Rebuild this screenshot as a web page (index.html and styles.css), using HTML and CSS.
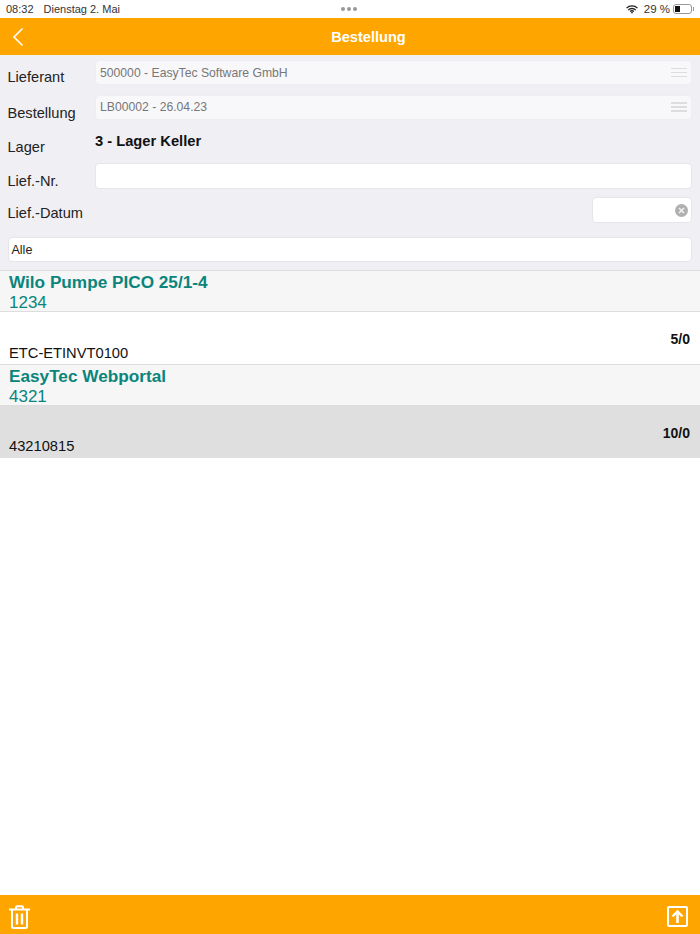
FILE: index.html
```html
<!DOCTYPE html>
<html lang="de">
<head>
    <meta charset="UTF-8">
    <meta name="viewport" content="width=device-width, initial-scale=1.0">
    <title>Bestellung</title>
    <link rel="stylesheet" href="styles.css">
</head>
<body>
    <div class="page">
        <div class="statusbar">
            <div class="status-left">
                <span>08:32</span>
                <span>Dienstag 2. Mai</span>
            </div>
            <div class="status-dots"><i></i><i></i><i></i></div>
            <div class="status-right">
                <svg class="wifi" width="12" height="9" viewBox="0 0 14 10">
                    <path d="M0.6 3.4a9.2 9.2 0 0 1 12.8 0M2.7 5.5a6.2 6.2 0 0 1 8.6 0M4.8 7.4a3.2 3.2 0 0 1 4.4 0" fill="none" stroke="#222" stroke-width="1.6"/>
                    <path d="M7 10l-1.4-1.5a2 2 0 0 1 2.8 0z" fill="#222"/>
                </svg>
                <span class="percent">29 %</span>
                <div class="battery"><div class="battery-level"></div></div>
                <div class="battery-tip"></div>
            </div>
        </div>

        <header class="topbar">
            <svg class="back" width="12" height="20" viewBox="0 0 12 20">
                <path d="M10.5 1.5L2 10l8.5 8.5" fill="none" stroke="#fff" stroke-width="1.6"/>
            </svg>
            <h1>Bestellung</h1>
        </header>

        <form class="form">
            <div class="row row-select">
                <label>Lieferant</label>
                <div class="field select">
                    <span>500000 - EasyTec Software GmbH</span>
                    <div class="lines"><i></i><i></i><i></i></div>
                </div>
            </div>
            <div class="row row-select">
                <label>Bestellung</label>
                <div class="field select">
                    <span>LB00002 - 26.04.23</span>
                    <div class="lines"><i></i><i></i><i></i></div>
                </div>
            </div>
            <div class="row row-static">
                <label>Lager</label>
                <strong>3 - Lager Keller</strong>
            </div>
            <div class="row row-input">
                <label>Lief.-Nr.</label>
                <div class="field"></div>
            </div>
            <div class="row row-date">
                <label>Lief.-Datum</label>
                <div class="field date">
                    <svg width="13" height="13" viewBox="0 0 13 13">
                        <circle cx="6.5" cy="6.5" r="6.5" fill="#b0b0b0"/>
                        <path d="M4 4l5 5M9 4l-5 5" stroke="#f0f0f0" stroke-width="1.7"/>
                    </svg>
                </div>
            </div>
            <div class="field filter">Alle</div>
        </form>

        <div class="list">
            <div class="group">
                <div class="group-title">Wilo Pumpe PICO 25/1-4</div>
                <div class="group-sub">1234</div>
            </div>
            <div class="item">
                <div class="code">ETC-ETINVT0100</div>
                <div class="qty">5/0</div>
            </div>
            <div class="group">
                <div class="group-title">EasyTec Webportal</div>
                <div class="group-sub">4321</div>
            </div>
            <div class="item selected">
                <div class="code">43210815</div>
                <div class="qty">10/0</div>
            </div>
        </div>

        <footer class="bottombar">
            <svg width="21" height="24" viewBox="0 0 21 24" fill="none" stroke="#fff" stroke-width="2">
                <path d="M0 4.5h21M7 4V2.200q0-1 1-1h5q1 0 1 1V4"/>
                <path d="M3 5v16.500q0 1.500 1.500 1.500h12q1.500 0 1.500-1.500V5"/>
                <path d="M8 8.500v11M13 8.500v11" stroke-width="2.400"/>
            </svg>
            <svg width="21" height="21" viewBox="0 0 21 21" fill="none" stroke="#fff">
                <rect x="1" y="1" width="19" height="19" rx="1" stroke-width="2"/>
                <path d="M10.500 17V6.500" stroke-width="2.600"/>
                <path d="M5.500 10.500l5-5 5 5" stroke-width="2.400"/>
            </svg>
        </footer>
    </div>
</body>
</html>
```
FILE: styles.css
```css
* {
    box-sizing: border-box;
}

body {
    margin: 0;
    font-family: 'Liberation Sans', Arial, sans-serif;
    color: #111;
    background: #fff;
}

.page {
    height: 934px;
    display: flex;
    flex-direction: column;
    overflow: hidden;
}

/* status bar */
.statusbar {
    height: 18px;
    display: flex;
    justify-content: space-between;
    align-items: center;
    padding: 0 6px;
    font-size: 11px;
    color: #333;
    position: relative;
}

.status-left {
    display: flex;
    gap: 10px;
}

.status-dots {
    position: absolute;
    left: 341px;
    top: 7px;
    display: flex;
    gap: 2px;
}

.status-dots i {
    width: 4px;
    height: 4px;
    border-radius: 50%;
    background: #999;
}

.status-right {
    display: flex;
    align-items: center;
    gap: 3px;
}

.percent {
    font-size: 11.500px;
    margin-left: 3px;
}

.battery {
    width: 19px;
    height: 10px;
    border: 1px solid #999;
    border-radius: 3px;
    padding: 1px;
}

.battery-level {
    width: 5px;
    height: 100%;
    background: #111;
}

.battery-tip {
    width: 1px;
    height: 4px;
    margin-left: -2px;
    background: #999;
}

/* top bar */
.topbar {
    height: 37px;
    background: #ffa500;
    display: flex;
    align-items: center;
    justify-content: center;
    position: relative;
    padding-left: 37px;
}

.topbar h1 {
    margin: 0;
    font-size: 14.600px;
    font-weight: bold;
    color: #fff;
}

.back {
    position: absolute;
    left: 12px;
    top: 9px;
}

/* form */
.form {
    background: #efeff4;
    padding: 5px 8px 0 7.500px;
    height: 215px;
}

.row {
    display: flex;
    align-items: flex-start;
}

.row label {
    width: 87.500px;
    flex-shrink: 0;
    font-size: 14.600px;
    color: #222;
}

.row-select {
    height: 34.500px;
}

.row-select label {
    margin-top: 9px;
}

.row-select + .row-select label {
    margin-top: 10px;
}

.row-static {
    height: 34px;
}

.row-static label {
    margin-top: 10px;
}

.row-static strong {
    font-size: 14.700px;
    margin-top: 3.500px;
}

.row-input {
    height: 34px;
}

.row-input label {
    margin-top: 10px;
}

.row-date {
    height: 40px;
    justify-content: space-between;
}

.row-date label {
    margin-top: 8px;
}

.field {
    background: #fff;
    border: 1px solid #e6e6ea;
    border-radius: 4px;
    height: 26px;
    flex: 1;
}

.select {
    background: #f8f8fa;
    border-color: #eeeef2;
    height: 25px;
    display: flex;
    align-items: center;
    justify-content: space-between;
    padding: 0 4px;
    font-size: 12.200px;
    color: #777;
}

.lines {
    display: flex;
    flex-direction: column;
    gap: 2.500px;
}

.lines i {
    display: block;
    width: 16px;
    height: 1.500px;
    background: #ddd;
}

.date {
    flex: 0 0 100px;
    display: flex;
    align-items: center;
    justify-content: flex-end;
    padding-right: 3px;
}

.filter {
    height: 25px;
    font-size: 12.500px;
    color: #222;
    display: flex;
    align-items: center;
    padding-left: 3px;
}

/* list */
.list {
    flex: 1;
    border-top: 1px solid #ddd;
}

.group {
    height: 41px;
    padding: 2px 9px 0;
    background: #f6f6f6;
    border-bottom: 1px solid #ddd;
    color: #09857c;
}

.group-title {
    font-size: 17.200px;
    font-weight: bold;
    line-height: 18px;
    margin-bottom: 2px;
}

.group-sub {
    font-size: 17px;
    line-height: 20px;
}

.item {
    height: 53px;
    padding: 0 10px 3px 9px;
    border-bottom: 1px solid #ddd;
    display: flex;
    justify-content: space-between;
    align-items: flex-end;
}

.item.selected {
    height: 52px;
    padding-bottom: 4px;
    background: #dfdfdf;
    border-bottom: none;
}

.qty {
    align-self: flex-start;
    margin-top: 19px;
    font-size: 14px;
    font-weight: bold;
    line-height: 16px;
}

.code {
    font-size: 14.700px;
    line-height: 16px;
}

/* bottom bar */
.bottombar {
    height: 39px;
    background: #ffa500;
    display: flex;
    justify-content: space-between;
    align-items: center;
    padding: 4px 12px 0 9px;
}
```
